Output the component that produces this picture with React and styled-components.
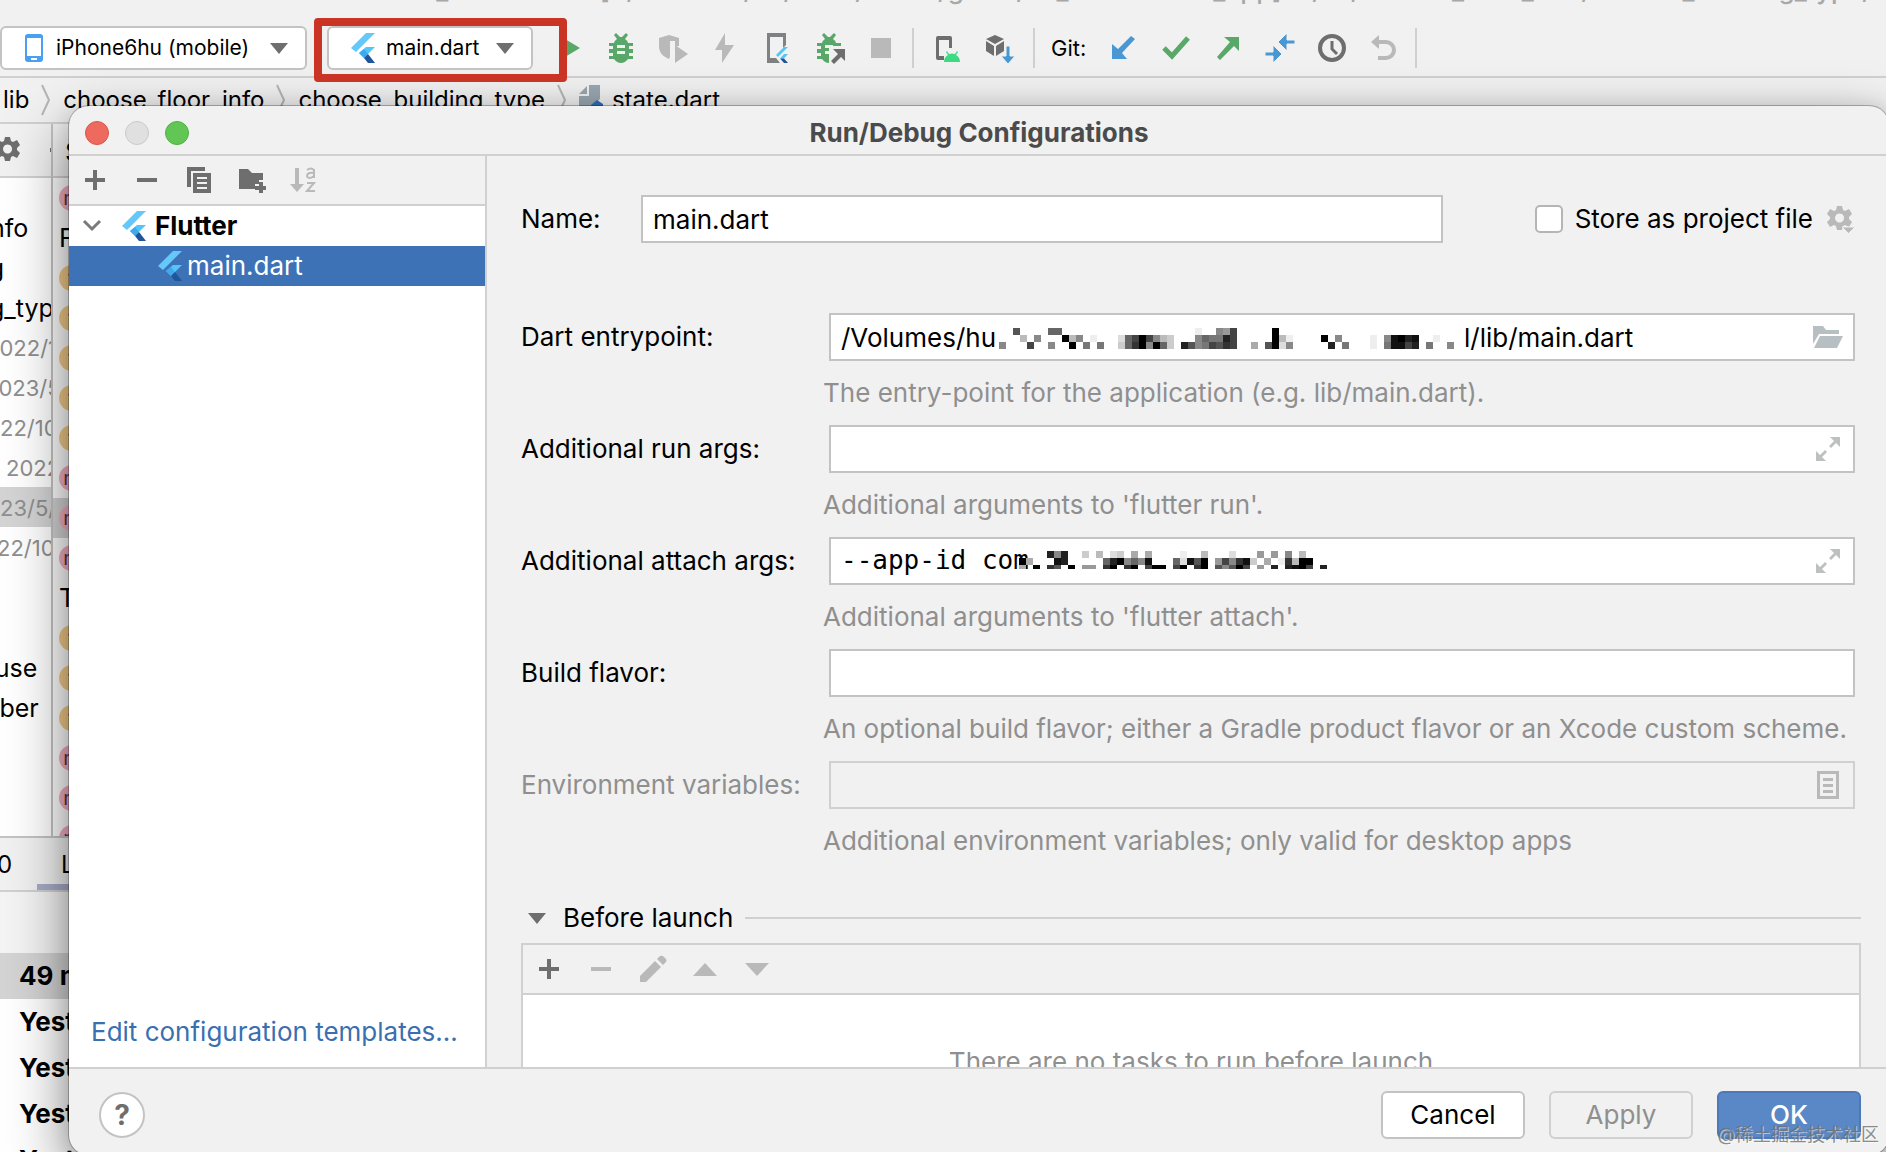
import React, { useState } from "react";
import styled, { createGlobalStyle, css } from "styled-components";

const colors = {
  panel: "#f1f1f1",
  line: "#d0d0d0",
  field: "#c3c3c3",
  icon: "#6e6e6e",
  disabled: "#b9b9b9",
  hint: "#8f8f8f",
  accent: "#3e72b7",
  green: "#59a869",
  blue: "#4a98d3",
};

// The tree is scrolled sideways, so most names start left of the panel.
const projectRows = [
  { text: "info", start: -16 },
  { text: "ng", start: -26 },
  { text: "g_type", start: -11 },
  { text: "2022/1", start: -14, muted: true },
  { text: "2023/5", start: -15, muted: true },
  { text: "22/10", start: 0, muted: true },
  { text: "2022", start: 6, muted: true },
  { text: "23/5/", start: 0, muted: true, selected: true },
  { text: "22/10/", start: -3, muted: true },
  { text: "", start: 0 },
  { text: "", start: 0 },
  { text: "house", start: -35 },
  { text: "number", start: -52 },
];

const structureRows = [
  "m", "F", "f", "f", "f", "f", "f", "m", "m*", "m", "T", "f", "f", "f", "m", "m", "m",
];

const PATH_MOSAIC = [
  "..5....66...................e..894.....0",
  "...b.8...0b8.e...d64048bc...867724..f..0be....0.8....e.81021..e.",
  "8...4..8..0.7.7..c630806c.25874534..a.50d8.....2.7...e.71142.7..8",
];

const APP_ID_MOSAIC = [
  "....282..c.b.dc.a.a....e..b...d...9.9.8.b",
  "0a...12.....6208681...6d150.94831c.a.e3b00",
  "a.0.35.0.99.30.30.400.40.30.58504.9.2.2104.2",
];

const App = () => {
  const [name, setName] = useState("main.dart");
  const [entry, setEntry] = useState(
    "/Volumes/hu" + "\u2003".repeat(18) + "l/lib/main.dart"
  );
  const [runArgs, setRunArgs] = useState("");
  const [attachArgs, setAttachArgs] = useState("--app-id com");
  const [flavor, setFlavor] = useState("");

  return (
    <>
      <GlobalStyle />
      <Desktop>
        <WindowTitle>
          <span>
            hu_commercial [~/Volumes/hu/work/flutter/gitlab/hu_commercial_app]
            .../lib/choose_floor_info/choose_building_type/s
          </span>
        </WindowTitle>
        <MainToolbar />
        <Breadcrumbs />
        <Workspace>
          <ProjectPanel>
            <PanelHeader>
              <Gear color={colors.icon} size={28} />
              <Minus />
            </PanelHeader>
            <ProjectList>
              {projectRows.map((row, i) => (
                <ProjectRow
                  key={i}
                  $start={row.start}
                  $muted={row.muted}
                  $selected={row.selected}
                >
                  {row.text}
                </ProjectRow>
              ))}
            </ProjectList>
          </ProjectPanel>
          <StructurePanel>
            <StructureHeader>Structure</StructureHeader>
            {structureRows.map((kind, i) => (
              <StructureRow key={i} $selected={kind === "m*"}>
                {kind === "F" || kind === "T" ? (
                  kind
                ) : (
                  <Badge $method={kind[0] === "m"}>{kind[0]}</Badge>
                )}
              </StructureRow>
            ))}
          </StructurePanel>
        </Workspace>
        <LogPanel>
          <LogTabs>
            <LogTab>0</LogTab>
            <LogTab $active>Log</LogTab>
          </LogTabs>
          <LogSpacer />
          <LogRow $selected>49 minutes ago</LogRow>
          <LogRow>Yesterday</LogRow>
          <LogRow>Yesterday</LogRow>
          <LogRow>Yesterday</LogRow>
          <LogRow>Yesterday</LogRow>
        </LogPanel>

        <Dialog role="dialog" aria-labelledby="dialog-title">
          <TitleBar>
            <Lights>
              <Light $fill="#ee6a5f" $edge="#d9564c" />
              <Light $fill="#e0e0e0" $edge="#c9c9c9" />
              <Light $fill="#61c654" $edge="#4fb044" />
            </Lights>
            <Title id="dialog-title">Run/Debug Configurations</Title>
          </TitleBar>
          <Body>
            <Sidebar>
              <SideToolbar>
                <ToolButton aria-label="Add"><Plus /></ToolButton>
                <ToolButton aria-label="Remove"><Minus /></ToolButton>
                <ToolButton aria-label="Copy"><CopyIcon /></ToolButton>
                <ToolButton aria-label="New folder"><NewFolder /></ToolButton>
                <ToolButton aria-label="Sort"><SortAz /></ToolButton>
              </SideToolbar>
              <Tree>
                <TreeGroup>
                  <svg width="20" height="14" viewBox="0 0 20 14">
                    <path d="M2 2l8 8 8-8" fill="none" stroke="#7a7a7a" strokeWidth="3" />
                  </svg>
                  <FlutterLogo />
                  Flutter
                </TreeGroup>
                <TreeLeaf>
                  <FlutterLogo />
                  main.dart
                </TreeLeaf>
              </Tree>
              <TemplatesLink href="#templates">Edit configuration templates...</TemplatesLink>
            </Sidebar>

            <Form>
              <NameRow>
                <Label htmlFor="name">Name:</Label>
                <NameInput id="name" value={name} onChange={(e) => setName(e.target.value)} />
                <Store>
                  <Checkbox id="store" type="checkbox" />
                  <label htmlFor="store">Store as project file</label>
                  <Gear color={colors.disabled} size={28} menu />
                </Store>
              </NameRow>

              <Grid>
                <Label htmlFor="entry">Dart entrypoint:</Label>
                <Field>
                  <Input id="entry" value={entry} onChange={(e) => setEntry(e.target.value)} />
                  <PathCensor><Mosaic rows={PATH_MOSAIC} lastHeight={7} /></PathCensor>
                  <FieldIcon><FolderOpen /></FieldIcon>
                </Field>
                <Hint>The entry-point for the application (e.g. lib/main.dart).</Hint>

                <Label htmlFor="run">Additional run args:</Label>
                <Field>
                  <Input id="run" value={runArgs} onChange={(e) => setRunArgs(e.target.value)} />
                  <FieldIcon><Expand /></FieldIcon>
                </Field>
                <Hint>Additional arguments to 'flutter run'.</Hint>

                <Label htmlFor="attach">Additional attach args:</Label>
                <Field>
                  <Input
                    id="attach"
                    $mono
                    value={attachArgs}
                    onChange={(e) => setAttachArgs(e.target.value)}
                  />
                  <AppIdCensor><Mosaic rows={APP_ID_MOSAIC} lastHeight={4} /></AppIdCensor>
                  <FieldIcon><Expand /></FieldIcon>
                </Field>
                <Hint>Additional arguments to 'flutter attach'.</Hint>

                <Label htmlFor="flavor">Build flavor:</Label>
                <Field>
                  <Input id="flavor" value={flavor} onChange={(e) => setFlavor(e.target.value)} />
                </Field>
                <Hint>An optional build flavor; either a Gradle product flavor or an Xcode custom scheme.</Hint>

                <Label htmlFor="env" $disabled>Environment variables:</Label>
                <Field>
                  <Input id="env" disabled />
                  <FieldIcon><ListIcon /></FieldIcon>
                </Field>
                <Hint>Additional environment variables; only valid for desktop apps</Hint>
              </Grid>

              <SectionHeader>
                <DropArrow />
                Before launch
              </SectionHeader>
              <TaskBox>
                <TaskToolbar>
                  <ToolButton aria-label="Add task"><Plus /></ToolButton>
                  <ToolButton aria-label="Remove task" disabled><Minus color={colors.disabled} /></ToolButton>
                  <ToolButton aria-label="Edit task" disabled><Pencil /></ToolButton>
                  <ToolButton aria-label="Move up" disabled>
                    <svg width="24" height="13" viewBox="0 0 24 13">
                      <path d="M0 13h24L12 0z" fill={colors.disabled} />
                    </svg>
                  </ToolButton>
                  <ToolButton aria-label="Move down" disabled>
                    <svg width="24" height="13" viewBox="0 0 24 13">
                      <path d="M0 0h24L12 13z" fill={colors.disabled} />
                    </svg>
                  </ToolButton>
                </TaskToolbar>
                <TaskList>There are no tasks to run before launch</TaskList>
              </TaskBox>
            </Form>
          </Body>
          <Footer>
            <HelpButton aria-label="Help">?</HelpButton>
            <Actions>
              <DialogButton>Cancel</DialogButton>
              <DialogButton disabled>Apply</DialogButton>
              <DialogButton $primary>OK</DialogButton>
            </Actions>
          </Footer>
        </Dialog>
        <Watermark>@稀土掘金技术社区</Watermark>
      </Desktop>
    </>
  );
};

const MainToolbar = () => (
  <Toolbar>
    <Combo>
      <svg width="21" height="28" viewBox="-1 0 21 28">
        <rect width="18" height="28" rx="3" fill="#4a9ff0" />
        <path d="M2 4h14v18H2z" fill="#fff" />
        <path d="M6 24h6v2H6z" fill="#fff" />
      </svg>
      <ComboText>iPhone6hu (mobile)</ComboText>
      <DropArrow />
    </Combo>
    <ConfigSlot>
      <Combo $config>
        <FlutterLogo />
        <ComboText>main.dart</ComboText>
        <DropArrow />
      </Combo>
      <Highlight />
    </ConfigSlot>
    <ToolButton aria-label="Run">
      <svg width="32" height="32" viewBox="0 0 32 32">
        <path d="M7 4l20 12L7 28z" fill={colors.green} />
      </svg>
    </ToolButton>
    <ToolButton aria-label="Debug"><Bug /></ToolButton>
    <ToolButton aria-label="Coverage">
      <svg width="32" height="32" viewBox="0 0 32 32">
        <path d="M2 6l10-3 10 3v8h-4V9h-5v16l-1 2C5 24 2 20 2 14z" fill={colors.disabled} />
        <path d="M18 13l13 9-13 9z" fill={colors.disabled} />
      </svg>
    </ToolButton>
    <ToolButton aria-label="Hot reload">
      <svg width="32" height="32" viewBox="0 0 32 32">
        <path d="M16 1v12h9L13 31V18H6z" fill={colors.disabled} />
      </svg>
    </ToolButton>
    <ToolButton aria-label="Flutter attach">
      <svg width="32" height="32" viewBox="0 0 32 32">
        <path d="M6 1h19v12l-3 3V5H9v21h6l4 5H6z" fill="#7f8183" />
        <path d="M23 15h4L17 25l-2-2z" fill="#54c5f8" />
        <path d="M23 22h4l-4 4.500-4 0z" fill="#54c5f8" />
        <path d="M19 26.500h4l4 4.500h-4z" fill="#1f5599" />
      </svg>
    </ToolButton>
    <ToolButton aria-label="Attach debugger"><Bug attach /></ToolButton>
    <ToolButton aria-label="Stop">
      <svg width="32" height="32" viewBox="0 0 32 32">
        <path d="M6 6h20v20H6z" fill={colors.disabled} />
      </svg>
    </ToolButton>
    <Separator />
    <ToolButton aria-label="Device manager">
      <svg width="32" height="32" viewBox="0 0 32 32">
        <path d="M2 6q0-2 2-2h12q2 0 2 2v10h-3V8H5v16h5v4H4q-2 0-2-2z" fill={colors.icon} />
        <path d="M10 30a8 8 0 0 1 4-7l-2-3 1-1 2 3q3-1 6 0l2-3 1 1-2 3a8 8 0 0 1 4 7z" fill="#3ddc84" />
      </svg>
    </ToolButton>
    <ToolButton aria-label="SDK manager">
      <svg width="32" height="32" viewBox="0 0 32 32">
        <path d="M9 3l9 4-9 5-9-5zM0 9l8 5v10l-8-5zM18 9l-8 5v10l8-5z" fill={colors.icon} />
        <path d="M20 14h4v10h5l-7 8-7-8h5z" fill={colors.blue} stroke={colors.panel} strokeWidth="1" />
      </svg>
    </ToolButton>
    <Separator />
    <GitLabel>Git:</GitLabel>
    <ToolButton aria-label="Update project">
      <svg width="32" height="32" viewBox="0 0 32 32">
        <path d="M23 4l4 3-13 14 5 6H4V12l6 5z" fill={colors.blue} />
      </svg>
    </ToolButton>
    <ToolButton aria-label="Commit">
      <svg width="32" height="32" viewBox="0 0 32 32">
        <path d="M4 16l8 8L28 6" fill="none" stroke={colors.green} strokeWidth="5" />
      </svg>
    </ToolButton>
    <ToolButton aria-label="Push">
      <svg width="32" height="32" viewBox="0 0 32 32">
        <path d="M12 5h15v14l-5-5L8 28l-3-3 13-15z" fill={colors.green} />
      </svg>
    </ToolButton>
    <ToolButton aria-label="Merge">
      <svg width="32" height="32" viewBox="0 0 32 32">
        <path
          d="M14 10l9-9v7h8v4h-8v7zM18 22l-9-9v7H1v4h8v7z"
          fill={colors.blue}
          stroke={colors.panel}
          strokeWidth="1"
        />
      </svg>
    </ToolButton>
    <ToolButton aria-label="History">
      <svg width="32" height="32" viewBox="0 0 32 32">
        <circle cx="16" cy="16" r="12" fill="none" stroke={colors.icon} strokeWidth="4" />
        <path d="M16 9v8l5 5" fill="none" stroke={colors.icon} strokeWidth="3" />
      </svg>
    </ToolButton>
    <ToolButton aria-label="Rollback">
      <svg width="32" height="32" viewBox="0 0 32 32">
        <path d="M9 10h9a8 8 0 0 1 0 16H10" fill="none" stroke={colors.disabled} strokeWidth="4" />
        <path d="M11 3v14l-8-7z" fill={colors.disabled} />
      </svg>
    </ToolButton>
    <Separator />
  </Toolbar>
);

const Breadcrumbs = () => (
  <Crumbs>
    <Crumb>lib</Crumb>
    <Chevron />
    <Crumb>choose_floor_info</Crumb>
    <Chevron />
    <Crumb>choose_building_type</Crumb>
    <Chevron />
    <Crumb>
      <svg width="24" height="30" viewBox="0 0 24 30">
        <path d="M0 9L8 1v8z" fill="#9aa7b0" />
        <path d="M10 0h11v14L8 26H0V11h10z" fill="#9aa7b0" />
        <path d="M12 20l6-5 6 4v11H12z" fill="#2f6fb5" />
      </svg>
      state.dart
    </Crumb>
  </Crumbs>
);

const Chevron = () => (
  <svg width="10" height="32" viewBox="0 0 10 32">
    <path d="M1 1l7 15-7 15" fill="none" stroke="#b5b5b5" strokeWidth="2" />
  </svg>
);

const DropArrow = () => (
  <svg width="18" height="11" viewBox="0 0 18 11">
    <path d="M0 0h18L9 11z" fill={colors.icon} />
  </svg>
);

const FlutterLogo = () => (
  <svg width="24" height="30" viewBox="0 0 24 30">
    <path d="M15 0h9L5 19l-5-4z" fill="#64c8f8" />
    <path d="M15 14h9L13 25l-5-5z" fill="#54c5f8" />
    <path d="M8 20l5-4 4 5-4 4z" fill="#3fa9f0" />
    <path d="M13 25l4-4 7 9h-7z" fill="#1f5599" />
  </svg>
);

const Bug = ({ attach }) => (
  <svg width="32" height="32" viewBox="0 0 32 32">
    <path d="M9 3l2-2 4 4h2l4-4 2 2-3 4q3 2 3 4h5v3h-4v3h4v4h-4v3h4v3h-5q-3 4-7 4t-7-4H4v-3h4v-3H4v-4h4v-3H4v-3h5q0-2 3-4z" fill={colors.green} />
    <path d="M12 13h8v3h-8zM12 19h8v3h-8z" fill={colors.panel} />
    {attach && (
      <>
        <path d="M16 14h16v18H16z" fill={colors.panel} />
        <path d="M20 17h12v12l-4-4-7 7-3-3 7-7z" fill={colors.icon} />
      </>
    )}
  </svg>
);

const Gear = ({ color, size, menu }) => (
  <svg width={size} height={size} viewBox="0 0 28 28">
    <path
      d="M10 1h5l1 4 2 1 4-2 3 5-3 3v2l3 3-3 5-4-2-2 1-1 4h-5l-1-4-2-1-4 2-3-5 3-3v-2L0 9l3-5 4 2 2-1zM12.500 8.500a4.500 4.500 0 1 0 .1 0z"
      fill={color}
      fillRule="evenodd"
    />
    {menu && (
      <path d="M15 22h13l-6.500 6.500z" fill={color} stroke={colors.panel} strokeWidth="1" />
    )}
  </svg>
);

const Plus = () => (
  <svg width="20" height="20" viewBox="0 0 20 20">
    <path d="M8 0h4v8h8v4h-8v8H8v-8H0V8h8z" fill={colors.icon} />
  </svg>
);

const Minus = ({ color = colors.icon }) => (
  <svg width="20" height="20" viewBox="0 0 20 20">
    <path d="M0 8h20v4H0z" fill={color} />
  </svg>
);

const CopyIcon = () => (
  <svg width="26" height="26" viewBox="0 0 26 26">
    <path d="M1 0h18v4H5v16H1z" fill={colors.icon} />
    <path d="M7 6h18v20H7zM11 10v2h10v-2zM11 15v2h10v-2zM11 20v2h10v-2z" fill={colors.icon} fillRule="evenodd" />
  </svg>
);

const NewFolder = () => (
  <svg width="30" height="26" viewBox="0 0 30 26">
    <path d="M3 2h9l4 4h11v7h-4v4h-4v5H3z" fill={colors.icon} />
    <path d="M23 15h4v4h4v4h-4v4h-4v-4h-4v-4h4z" fill={colors.icon} />
  </svg>
);

const SortAz = () => (
  <svg width="28" height="28" viewBox="0 0 28 28">
    <path d="M6 2h4v16h5l-7 8-7-8h5z" fill={colors.disabled} />
    <path
      d="M18 4q4-3 7 0v8M25 7q-7-1-7 3 1 4 7 0M18 17h7l-7 8h8"
      fill="none"
      stroke={colors.disabled}
      strokeWidth="2"
    />
  </svg>
);

const Pencil = () => (
  <svg width="28" height="28" viewBox="0 0 28 28">
    <path d="M1 21L16 6l6 6L7 27H1z" fill={colors.disabled} />
    <path d="M18 4l3-3q2-1 4 1l2 2q1 2 0 3l-3 3z" fill={colors.disabled} />
  </svg>
);

const FolderOpen = () => (
  <svg width="30" height="22" viewBox="0 0 30 22">
    <path d="M0 0h10l3 4h13v4H6L0 18z" fill="#b8bfc2" />
    <path d="M7 10h23l-6 12H1z" fill="#b8bfc2" />
  </svg>
);

const Expand = () => (
  <svg width="24" height="24" viewBox="0 0 24 24">
    <path d="M14 0h10v10l-4-4-5 5-2-2 5-5zM0 14l4 4 5-5 2 2-5 5 4 4H0z" fill="#bcc0c1" />
  </svg>
);

const ListIcon = () => (
  <svg width="22" height="28" viewBox="0 0 22 28">
    <path d="M0 0h22v28H0zM3 3v22h16V3z" fill={colors.disabled} fillRule="evenodd" />
    <path d="M6 7h10v3H6zM6 13h10v3H6zM6 19h10v3H6z" fill={colors.disabled} />
  </svg>
);

// Every character is one 7px cell: a hex digit is its grey level, a dot is empty.
const Mosaic = ({ rows, lastHeight }) => (
  <svg width="462" height={rows.length * 7} shapeRendering="crispEdges">
    {rows.map((row, y) =>
      [...row].map((c, x) =>
        c === "." ? null : (
          <rect
            key={`${x}-${y}`}
            x={x * 7}
            y={y * 7}
            width="7"
            height={y === rows.length - 1 ? lastHeight : 7}
            fill={`#${c}${c}${c}`}
          />
        )
      )
    )}
  </svg>
);

const GlobalStyle = createGlobalStyle`
  * {
    box-sizing: border-box;
  }

  body {
    margin: 0;
    overflow: hidden;
    font-family: Inter, "Noto Sans CJK SC", sans-serif;
    font-size: 26px;
    line-height: 32px;
    color: #000;
  }

  button, input {
    font: inherit;
    color: inherit;
  }

  svg {
    display: block;
    flex: none;
  }
`;

const Desktop = styled.div`
  position: relative;
  display: flex;
  flex-direction: column;
  height: 100vh;
  overflow: hidden;
  background: ${colors.panel};
`;

const WindowTitle = styled.div`
  flex: none;
  display: flex;
  align-items: flex-end;
  justify-content: flex-end;
  height: 6px;
  overflow: hidden;
  white-space: nowrap;
  font-weight: 500;
  color: #a8a8a8;
`;

const Toolbar = styled.div`
  flex: none;
  display: flex;
  align-items: flex-start;
  gap: 20px;
  height: 72px;
  padding-top: 20px;
  border-bottom: 2px solid ${colors.line};
`;

const Combo = styled.button`
  display: flex;
  align-items: center;
  width: ${(props) => (props.$config ? "206px" : "307px")};
  height: 44px;
  padding: 0 17px 0 22px;
  border: 2px solid ${colors.field};
  border-radius: 6px;
  background: #fff;
`;

const ComboText = styled.span`
  flex: 1;
  padding-left: 11px;
  text-align: left;
  white-space: nowrap;
  font-size: 21px;
`;

const ConfigSlot = styled.div`
  position: relative;
  z-index: 1;
`;

const Highlight = styled.div`
  position: absolute;
  inset: -8px -34px -12px -13px;
  border: 8px solid #c93424;
  border-radius: 4px;
  pointer-events: none;
`;

const ToolButton = styled.button`
  flex: none;
  display: flex;
  align-items: center;
  justify-content: center;
  width: 32px;
  height: 44px;
  padding: 0;
  border: 0;
  background: none;
`;

const Separator = styled.div`
  width: 2px;
  height: 40px;
  margin-top: 2px;
  margin-left: -5px;
  background: ${colors.line};
`;

const GitLabel = styled.span`
  min-width: 37px;
  margin-left: -4px;
  line-height: 44px;
  font-size: 22px;
`;

const Crumbs = styled.div`
  flex: none;
  display: flex;
  align-items: center;
  gap: 12px;
  height: 46px;
  padding-left: 3px;
  border-bottom: 2px solid ${colors.line};
  font-size: 24px;
`;

const Crumb = styled.span`
  display: flex;
  align-items: center;
  gap: 9px;
`;

const Workspace = styled.div`
  flex: 1;
  display: flex;
  min-height: 0;
`;

const ProjectPanel = styled.div`
  width: 53px;
  border-right: 2px solid ${colors.field};
  background: #fff;
`;

const PanelHeader = styled.div`
  display: flex;
  align-items: center;
  gap: 27px;
  height: 54px;
  overflow: hidden;
  border-bottom: 2px solid ${colors.line};
  background: ${colors.panel};

  svg:first-child {
    margin-left: -5px;
  }
`;

const ProjectList = styled.div`
  padding-top: 29px;
`;

const ProjectRow = styled.div`
  height: 40px;
  overflow: hidden;
  text-indent: ${(props) => props.$start}px;
  white-space: nowrap;
  line-height: 42px;
  font-size: ${(props) => (props.$muted ? "22px" : "25px")};
  color: ${(props) => (props.$muted ? "#8f8f8f" : "#000")};
  background: ${(props) => (props.$selected ? "#d4d4d4" : "none")};
`;

const StructurePanel = styled.div`
  flex: 1;
  overflow: hidden;
  background: #fff;
`;

const StructureHeader = styled.div`
  height: 54px;
  padding-left: 12px;
  border-bottom: 2px solid ${colors.line};
  background: ${colors.panel};
  line-height: 56px;
`;

const StructureRow = styled.div`
  display: flex;
  align-items: center;
  height: 40px;
  padding-left: 6px;
  background: ${(props) => (props.$selected ? "#d4d4d4" : "none")};
`;

const Badge = styled.span`
  width: 26px;
  height: 26px;
  border-radius: 50%;
  background: ${(props) => (props.$method ? "#f4b0c1" : "#f4cd8b")};
  line-height: 26px;
  text-align: center;
  font-size: 20px;
  color: #5b3040;
`;

const LogPanel = styled.div`
  flex: none;
  height: 316px;
  overflow: hidden;
  border-top: 2px solid ${colors.field};
  background: #fff;
`;

const LogTabs = styled.div`
  display: flex;
  height: 54px;
  border-bottom: 2px solid ${colors.line};
  background: ${colors.panel};
  font-size: 24px;
`;

const LogTab = styled.div`
  width: ${(props) => (props.$active ? "120px" : "37px")};
  padding-left: ${(props) => (props.$active ? "24px" : "0")};
  border-bottom: ${(props) => (props.$active ? "6px solid #a8acc8" : "0")};
  line-height: 54px;
  text-indent: ${(props) => (props.$active ? "0" : "-3px")};
`;

const LogSpacer = styled.div`
  height: 61px;
  background: #f4f4f4;
`;

const LogRow = styled.div`
  height: 46px;
  padding-left: 19px;
  background: ${(props) => (props.$selected ? "#d4d4d4" : "#fff")};
  line-height: 46px;
  font-weight: 700;
`;

const Dialog = styled.div`
  position: absolute;
  inset: 106px -3px -3px 69px;
  display: flex;
  flex-direction: column;
  overflow: hidden;
  border-radius: 20px;
  background: ${colors.panel};
  box-shadow: 0 0 0 1px rgba(0, 0, 0, 0.25), 0 0 20px rgba(0, 0, 0, 0.1),
    0 24px 60px rgba(0, 0, 0, 0.5);
`;

const TitleBar = styled.div`
  flex: none;
  display: flex;
  align-items: center;
  height: 50px;
  padding-top: 6px;
  padding-left: 16px;
  padding-right: 16px;
  border-bottom: 2px solid ${colors.line};
`;

const Lights = styled.div`
  display: flex;
  gap: 16px;
  width: 104px;
`;

const Light = styled.span`
  width: 24px;
  height: 24px;
  border: 1px solid ${(props) => props.$edge};
  border-radius: 50%;
  background: ${(props) => props.$fill};
`;

const Title = styled.h1`
  flex: 1;
  margin: 0;
  padding-right: 104px;
  text-align: center;
  font-size: 26px;
  font-weight: 700;
  color: #4b4b4b;
`;

const Body = styled.div`
  flex: 1;
  display: flex;
  min-height: 0;
`;

const Sidebar = styled.div`
  flex: none;
  display: flex;
  flex-direction: column;
  width: 418px;
  border-right: 2px solid ${colors.line};
  background: #fff;
`;

const SideToolbar = styled.div`
  display: flex;
  gap: 20px;
  align-items: center;
  height: 50px;
  padding-left: 10px;
  border-bottom: 2px solid ${colors.line};
  background: ${colors.panel};
`;

const Tree = styled.div`
  flex: 1;
`;

const TreeGroup = styled.div`
  display: flex;
  align-items: center;
  height: 40px;
  padding-left: 13px;
  line-height: 42px;
  font-weight: 700;

  svg + svg {
    margin-left: 20px;
    margin-right: 9px;
  }
`;

const TreeLeaf = styled.div`
  display: flex;
  align-items: center;
  gap: 5px;
  height: 40px;
  padding-left: 89px;
  background: ${colors.accent};
  line-height: 42px;
  color: #fff;
`;

const TemplatesLink = styled.a`
  padding: 0 22px 19px;
  white-space: nowrap;
  text-decoration: none;
  color: #3a6fb0;
`;

const Form = styled.div`
  flex: 1;
  min-width: 0;
  overflow: hidden;
  padding: 39px 28px 0 34px;
`;

const NameRow = styled.div`
  display: flex;
  align-items: center;
  margin-bottom: 70px;
  padding-right: 6px;

  > label {
    width: 120px;
  }
`;

const Label = styled.label`
  line-height: 48px;
  white-space: nowrap;
  color: ${(props) => (props.$disabled ? colors.hint : "#000")};
`;

const Input = styled.input`
  width: 100%;
  height: 48px;
  padding: 0 10px;
  border: 2px solid ${colors.field};
  background: #fff;
  outline: none;
  ${(props) =>
    props.$mono &&
    css`
      padding-bottom: 2px;
      font-family: "DejaVu Sans Mono", monospace;
    `}

  &:disabled {
    border-color: ${colors.line};
    background: ${colors.panel};
  }
`;

const NameInput = styled(Input)`
  flex: 1;
  min-width: 0;
`;

const Store = styled.div`
  display: flex;
  align-items: center;
  height: 44px;
  margin-left: 92px;
  white-space: nowrap;

  svg {
    margin-left: 14px;
  }
`;

const Checkbox = styled.input`
  appearance: none;
  width: 28px;
  height: 28px;
  margin: 0 12px 0 0;
  border: 2px solid #b5b5b5;
  border-radius: 5px;
  background: #fff;
`;

const Grid = styled.div`
  display: grid;
  grid-template-columns: 302px 1fr;
`;

const Field = styled.div`
  position: relative;
  margin: 0 6px;
`;

const FieldIcon = styled.span`
  position: absolute;
  top: 0;
  right: 12px;
  display: flex;
  align-items: center;
  justify-content: center;
  width: 30px;
  height: 48px;
`;

const PathCensor = styled.div`
  position: absolute;
  top: 15px;
  left: 170px;
`;

const AppIdCensor = styled.div`
  position: absolute;
  top: 14px;
  left: 190px;
`;

const Hint = styled.p`
  grid-column: 2;
  margin: 0;
  line-height: 64px;
  white-space: nowrap;
  color: ${colors.hint};
`;

const SectionHeader = styled.div`
  display: flex;
  align-items: center;
  gap: 17px;
  padding: 28px 0 8px 7px;
  line-height: 34px;

  &::after {
    content: "";
    flex: 1;
    height: 2px;
    margin-left: -5px;
    background: ${colors.line};
  }
`;

const TaskBox = styled.div`
  border: 2px solid ${colors.line};
`;

const TaskToolbar = styled.div`
  display: flex;
  align-items: center;
  gap: 20px;
  height: 50px;
  padding-left: 10px;
  border-bottom: 2px solid ${colors.line};
`;

const TaskList = styled.div`
  height: 134px;
  background: #fff;
  line-height: 134px;
  text-align: center;
  color: ${colors.hint};
`;

const Footer = styled.div`
  flex: none;
  display: flex;
  justify-content: space-between;
  height: 88px;
  padding: 22px 28px 0 30px;
  border-top: 2px solid ${colors.line};
`;

const HelpButton = styled.button`
  width: 46px;
  height: 46px;
  margin-top: 1px;
  padding: 0;
  border: 2px solid ${colors.field};
  border-radius: 50%;
  background: #fff;
  font-size: 28px;
  font-weight: 700;
  color: ${colors.icon};
`;

const Actions = styled.div`
  display: flex;
  gap: 24px;
`;

const DialogButton = styled.button`
  width: 144px;
  height: 48px;
  padding: 0;
  border: 2px solid ${(props) => (props.$primary ? "#4d79b8" : colors.field)};
  border-radius: 6px;
  background: ${(props) => (props.$primary ? "#5a87c5" : "#fff")};
  color: ${(props) => (props.$primary ? "#fff" : "#000")};
  font-weight: ${(props) => (props.$primary ? 500 : 400)};

  &:disabled {
    border-color: ${colors.line};
    background: ${colors.panel};
    color: ${colors.hint};
  }
`;

const Watermark = styled.div`
  position: absolute;
  right: 7px;
  bottom: 4px;
  font-size: 18px;
  line-height: 26px;
  color: rgba(110, 110, 110, 0.8);
  text-shadow: 1px 1px 0 rgba(255, 255, 255, 0.5);
`;

export default App;
